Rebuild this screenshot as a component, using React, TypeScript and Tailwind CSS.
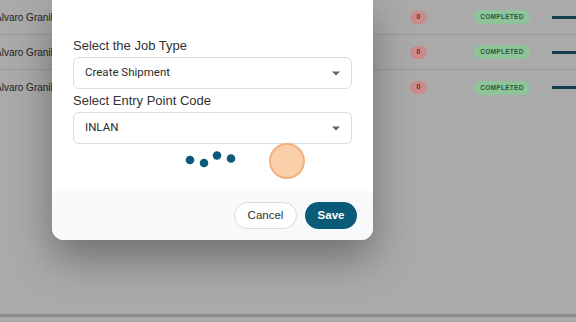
import React from "react";

const rows = [
  { name: "Alvaro Granillo", warnings: 0, status: "COMPLETED" },
  { name: "Alvaro Granillo", warnings: 0, status: "COMPLETED" },
  { name: "Alvaro Granillo", warnings: 0, status: "COMPLETED" },
];

function Caret() {
  return (
    <svg width="8" height="5" viewBox="0 0 8 5" className="shrink-0">
      <path d="M0 0.5 L8 0.5 L4 4.5 Z" fill="#5f6368" />
    </svg>
  );
}

function SelectBox({ value }: { value: string }) {
  return (
    <div className="flex h-[32px] items-center justify-between rounded-[6px] border border-[#d9dde1] bg-white pl-[11px] pr-[11px]">
      <span className="text-[11.5px] text-[#2b2b2b]" style={{ fontFamily: "Roboto, Arial, sans-serif" }}>
        {value}
      </span>
      <Caret />
    </div>
  );
}

function Loader() {
  return (
    <svg width="56" height="18" viewBox="0 0 56 18">
      <circle cx="5" cy="9" r="4.3" fill="#0b5a77" />
      <circle cx="19" cy="12" r="4.3" fill="#0b5a77" />
      <circle cx="32" cy="4.5" r="4.3" fill="#0b5a77" />
      <circle cx="46" cy="7.5" r="4.3" fill="#0b5a77" />
    </svg>
  );
}

export default function App() {
  return (
    <div
      className="relative h-[322px] w-[576px] overflow-hidden bg-[#aaaaaa]"
      style={{ fontFamily: '"Liberation Sans", Arial, sans-serif' }}
    >
      {/* page behind the dimmed overlay */}
      <div className="flex h-full flex-col">
        {rows.map((r, i) => (
          <div
            key={i}
            className={
              "flex h-[35px] shrink-0 items-center " +
              (i < rows.length - 1 ? "border-b border-[#999999]" : "")
            }
          >
            <span className="ml-[-5px] w-[415px] shrink-0 text-[10px] text-[#1f1f1f]">
              {r.name}
            </span>
            <span className="flex h-[13px] w-[17px] shrink-0 items-center justify-center rounded-full bg-[#c98b8b] text-[7px] font-bold text-[#7a2424]">
              {r.warnings}
            </span>
            <span className="ml-[47px] flex h-[14px] w-[56px] shrink-0 items-center justify-center rounded-full bg-[#8fc49b] text-[6.5px] font-bold tracking-[0.3px] text-[#2c5a36]">
              {r.status}
            </span>
            <span className="ml-[22px] h-[3px] flex-1 bg-[#143f4f]" />
          </div>
        ))}
        <div className="mt-auto mb-[5px] h-[3px] bg-[#8c8c8c]" />
      </div>

      {/* dialog */}
      <div className="absolute left-[52px] top-0 flex h-[240px] w-[321px] flex-col overflow-hidden rounded-b-[12px] bg-white shadow-[0_18px_40px_rgba(0,0,0,0.35)]">
        <div className="flex flex-1 flex-col px-[21px] pt-[38px]">
          <label className="mb-[3px] block text-[13px] leading-[16px] text-[#333333]">
            Select the Job Type
          </label>
          <SelectBox value="Create Shipment" />
          <label className="mt-[4px] mb-[3px] block text-[13px] leading-[16px] text-[#333333]">
            Select Entry Point Code
          </label>
          <SelectBox value="INLAN" />
          <div className="mt-[7px] flex justify-center">
            <Loader />
          </div>
        </div>
        <div className="flex h-[49px] items-center justify-end gap-[8px] bg-[#f7f9fa] px-[16px]">
          <button className="h-[27px] w-[63px] rounded-full border border-[#d5dbe0] bg-white text-[11.5px] text-[#333333]">
            Cancel
          </button>
          <button className="h-[27px] w-[52px] rounded-full bg-[#0b5a78] text-[11.5px] font-bold text-white">
            Save
          </button>
        </div>
      </div>

      {/* click indicator */}
      <div className="absolute left-[269px] top-[143px] h-[36px] w-[36px] rounded-full border-2 border-[#f4b07c] bg-[#fccfab]" />
    </div>
  );
}
